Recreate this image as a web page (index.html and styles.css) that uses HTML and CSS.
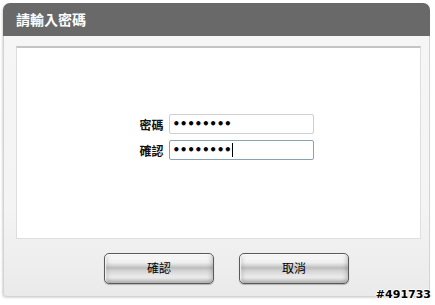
FILE: index.html
```html
<!DOCTYPE html>
<html lang="zh-Hant">
<head>
  <meta charset="UTF-8">
  <title>請輸入密碼</title>
  <link rel="stylesheet" href="styles.css">
</head>
<body>

<div class="dialog">
  <!-- Título -->
  <div class="dialog-header">請輸入密碼</div>

  <div class="dialog-body">
    <div class="fields">
      <div class="row">
        <span class="label">密碼</span>
        <div class="field"><span class="dots">••••••••</span></div>
      </div>
      <div class="row">
        <span class="label">確認</span>
        <div class="field focused"><span class="dots">••••••••</span><span class="caret"></span></div>
      </div>
    </div>
  </div>

  <div class="dialog-buttons">
    <button class="btn">確認</button>
    <button class="btn">取消</button>
  </div>
</div>

<div class="code">#491733</div>

</body>
</html>
```

FILE: styles.css
```css
/* General */
body {
  margin: 0;
  padding: 0;
  background: #fff;
  font-family: "Noto Sans CJK TC", "Noto Sans", sans-serif;
  position: relative;
  width: 435px;
  height: 305px;
  overflow: hidden;
}
.dialog {
  margin: 3px;
  width: 427px;
  height: 294px;
  box-sizing: border-box;
  border: 1px solid #d4d4d4;
  border-top: none;
  border-radius: 7px 7px 4px 4px;
  background: linear-gradient(#f6f6f6, #f4f4f4 70%, #eaeaea);
  box-shadow: -1px 1px 2px rgba(0,0,0,0.15);
  display: flex;
  flex-direction: column;
}
.dialog-header {
  height: 33px;
  margin: 0 -1px;
  line-height: 33px;
  padding-left: 13px;
  background: #696969;
  color: #fff;
  font-size: 14px;
  font-weight: bold;
  border-radius: 7px 7px 0 0;
}
.dialog-body {
  padding: 10px 8px 0 12px;
}
.fields {
  height: 193px;
  box-sizing: border-box;
  background: #fff;
  border: 1px solid #dedede;
  border-top: 2px solid #c4c4c4;
  padding-top: 66px;
  padding-left: 16px;
  display: flex;
  flex-direction: column;
  align-items: center;
  gap: 6px;
}
.row {
  display: flex;
  align-items: center;
  gap: 5px;
}
.label {
  font-size: 12px;
  font-weight: bold;
  color: #111;
}
.field {
  width: 145px;
  height: 20px;
  box-sizing: border-box;
  border: 1px solid #cfcfcf;
  border-radius: 2px;
  background: #fff;
  padding-left: 3px;
  display: flex;
  align-items: center;
}
.field.focused {
  border-color: #8ba3b0;
}
.dots {
  font-family: "DejaVu Sans", sans-serif;
  font-size: 12px;
  font-weight: bold;
  letter-spacing: -0.3px;
  color: #000;
  line-height: 18px;
}
.caret {
  width: 1px;
  height: 14px;
  background: #000;
  margin-left: 1px;
}
/* Botones */
.dialog-buttons {
  display: flex;
  gap: 25px;
  padding: 14px 0 0 100px;
}
.btn {
  width: 110px;
  height: 31px;
  border: 1px solid #5a5a5a;
  border-radius: 5px;
  background: linear-gradient(#fdfdfd, #eeeeee 30%, #bdbdbd 48%, #d4d4d4 58%, #f0f0f0 82%, #e2e2e2);
  box-shadow: inset 1px 1px 2px #fff, inset 0 -3px 4px rgba(0,0,0,0.2), inset 3px 0 4px rgba(0,0,0,0.08), inset -3px 0 4px rgba(0,0,0,0.08), 0 1px 1px rgba(0,0,0,0.25);
  font-family: "Noto Sans CJK TC", sans-serif;
  font-size: 12px;
  line-height: 12px;
  color: #000;
  padding: 0 0 2px;
}
.code {
  position: absolute;
  right: 4px;
  top: 288px;
  font-family: "DejaVu Sans", sans-serif;
  font-size: 11px;
  font-weight: bold;
  color: #000;
  text-shadow: 1px 0 #fff, -1px 0 #fff, 0 1px #fff, 0 -1px #fff;
}
```
